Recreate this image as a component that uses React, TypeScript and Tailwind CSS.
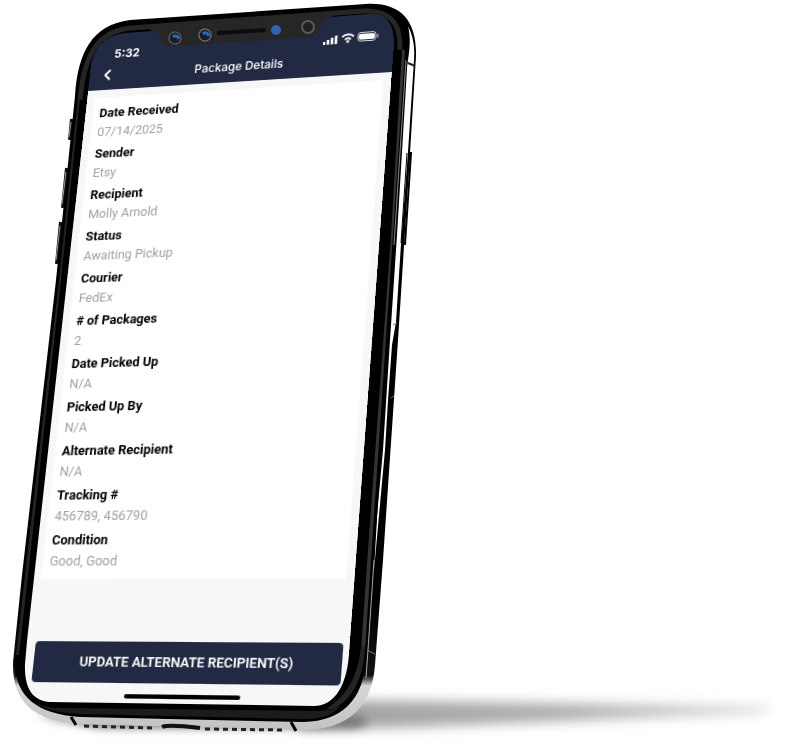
import React from "react";
import { ChevronLeft } from "lucide-react";

const details = [
  { label: "Date Received", value: "07/14/2025" },
  { label: "Sender", value: "Etsy" },
  { label: "Recipient", value: "Molly Arnold" },
  { label: "Status", value: "Awaiting Pickup" },
  { label: "Courier", value: "FedEx" },
  { label: "# of Packages", value: "2" },
  { label: "Date Picked Up", value: "N/A" },
  { label: "Picked Up By", value: "N/A" },
  { label: "Alternate Recipient", value: "N/A" },
  { label: "Tracking #", value: "456789, 456790" },
  { label: "Condition", value: "Good, Good" },
];

const PhoneBody = () => (
  <svg
    className="absolute left-0 top-0"
    width="800"
    height="746"
    viewBox="0 0 800 746"
    fill="none"
    aria-hidden="true"
  >
    <defs>
      <filter id="soft" x="-20%" y="-80%" width="140%" height="260%">
        <feGaussianBlur stdDeviation="6" />
      </filter>
      <filter id="tight" x="-20%" y="-100%" width="140%" height="300%">
        <feGaussianBlur stdDeviation="4" />
      </filter>
      <linearGradient id="floor" x1="340" y1="0" x2="775" y2="0" gradientUnits="userSpaceOnUse">
        <stop offset="0" stopColor="#a4a4a4" />
        <stop offset="0.5" stopColor="#b0b0b0" />
        <stop offset="1" stopColor="#e0e0e0" />
      </linearGradient>
      <linearGradient id="rim" x1="0" y1="600" x2="0" y2="730" gradientUnits="userSpaceOnUse">
        <stop offset="0" stopColor="#000" />
        <stop offset="0.58" stopColor="#111" />
        <stop offset="0.66" stopColor="#d8d5d8" />
        <stop offset="1" stopColor="#c4c1c4" />
      </linearGradient>
    </defs>

    {/* floor shadow */}
    <path d="M300 700 L420 701 L765 706 Q782 711 750 714 L420 727 L300 730 Z" fill="url(#floor)" filter="url(#soft)" />
    <path d="M36 716 L360 716 Q378 722 355 728 L100 728 Z" fill="#777" filter="url(#tight)" />

    {/* side keys */}
    <path d="M72 119 L70 140 M67 168 L63 208 M61 222 L57 264" stroke="#111" strokeWidth="4" />
    <path d="M71 122 L69 137 M66 172 L62 204 M60 226 L56 260" stroke="#999" strokeWidth="1" />
    <path d="M411 153 L409 153 L402 243 L405 244 Z" fill="#fff" stroke="#000" strokeWidth="2" />

    {/* metal frame */}
    <path
      d="M75 96 C78 52 92 25 130 20 L366 4 C400 2 417 20 416 56 L410 153 L398 340 L383 560 L375 665 C372 705 350 729 306 730 L78 724 C32 721 12 700 13 662 L22 575 L56 280 Z"
      fill="url(#rim)"
    />
    {/* polished highlight along the right side */}
    <path d="M408 26 C413 36 415 46 414 60 L408 152 L401 244 L396 322 L392 345 L388 400 L385 450 L374 570 L381 450 L395 240 L406 72 C410 50 411 38 408 26 Z" fill="#fff" />
    <path d="M374 560 L368 650 L366 678" stroke="#aaa" strokeWidth="1" />
    <path d="M407 153 L401 243" stroke="#000" strokeWidth="1" />
    <path d="M408 63 L415 66" stroke="#222" strokeWidth="2" />
    <path d="M393 325 L397 323 M391 398 L394 396 M367 650 L375 654" stroke="#777" strokeWidth="1" />

    <path d="M71 717 L76 725 M291 722 L296 731" stroke="#000" strokeWidth="3" />
    <path d="M84 726 L155 728 M205 729 L284 730" stroke="#222" strokeWidth="3" strokeDasharray="5 4" />
    <path d="M162 727 Q168 724 200 728" stroke="#111" strokeWidth="4" />
  </svg>
);

const Bezel = () => (
  <svg
    className="pointer-events-none absolute left-0 top-0"
    width="800"
    height="746"
    viewBox="0 0 800 746"
    fill="none"
    aria-hidden="true"
  >
    <path
      fillRule="evenodd"
      fill="#000"
      d="M77 100 C80 54 94 27 132 23 L366 7 C394 6 409 22 408 52 L397 235 L390 340 L383 450 L373 560 L366 660 C363 700 342 721 304 722 L80 717 C36 714 14 696 15 660 L24 575 L58 280 Z
         M90 72 C92 48 105 35 126 33 L368 14 C387 13 395 24 394 48 L392 72 L349 655 C346 690 332 706 314 706 L50 702 C34 701 24 690 25 664 L27 641 L88 91 Z"
    />
    {/* dark grey reflections in the glass edge */}
    <path d="M80 100 C84 54 98 31 131 28 L364 11 C391 10 401 24 400 50" stroke="#262626" strokeWidth="5" />
    <path d="M80 98 L61 280 L28 575 L19 655 L16 655 L25 575 L59 280 L78 98 Z" fill="#242424" />
    <path d="M402 50 L391 235 L368 550 L361 650 L365 650 L371 560 L393 235 L405 50 Z" fill="#333" />
    <path d="M406 60 L394 245" stroke="#888" strokeWidth="1" />
    <path d="M361 646 C358 676 348 695 326 709 L334 709 C354 698 364 676 365 646 Z" fill="#242424" />
    <path d="M36 703 C44 707 52 708 62 708 L314 711 C326 711 334 709 340 706 C332 716 320 719 304 719 L80 714 C60 713 46 710 36 703 Z" fill="#1c1c1c" />
    <path
      d="M150 30 Q158 31 160 38 Q162 47 174 46 L308 37 Q319 36 321 27 Q323 19 332 17 L330 12 L150 26 Z"
      fill="#262626"
    />
    <path d="M219 33 L264 30" stroke="#0c0c0c" strokeWidth="4" strokeLinecap="round" />
    <circle cx="175" cy="38" r="6" fill="#1b1c22" stroke="#555" strokeWidth="1.5" />
    <path d="M173 37 Q177 34 179 39" stroke="#2f66bb" strokeWidth="3" />
    <circle cx="205" cy="35" r="6" fill="#1b1c22" stroke="#666" strokeWidth="1.5" />
    <path d="M203 34 Q207 31 209 36" stroke="#2f66bb" strokeWidth="3" />
    <circle cx="276" cy="30" r="5" fill="#3262b5" />
    <circle cx="308" cy="27" r="6" fill="#202020" stroke="#5a5a5a" strokeWidth="2" />
  </svg>
);

const StatusIcons = () => (
  <svg width="60" height="14" viewBox="0 0 60 14" fill="none" aria-hidden="true">
    <path d="M1 13V10 M5 13V8 M9 13V6 M13 13V4" stroke="#fff" strokeWidth="2.6" />
    <path d="M19 6 Q25 1 31 6 M22 9 Q25 6 28 9" stroke="#fff" strokeWidth="2" />
    <circle cx="25" cy="11" r="1.5" fill="#fff" />
    <rect x="35" y="2.5" width="18" height="9" rx="3" stroke="#ddd" />
    <rect x="36" y="4" width="16" height="6" rx="2" fill="#fff" />
    <path d="M55 5V9" stroke="#ccc" />
  </svg>
);

const Screen = () => (
  <div className="absolute left-0 top-0 flex h-[672px] w-[314px] origin-top-left flex-col overflow-hidden rounded-[30px] bg-[#f7f7f8] [transform:matrix3d(0.92252,-0.06889,0,-0.0001164,-0.11587,0.92253,0,-0.00012085,0,0,1,0,95.416,31.96,0,1.007734)]">
    <header className="h-16 shrink-0 bg-[#222943] text-white">
      <div className="flex h-[34px] items-end justify-between pl-6 pr-3">
        <span className="font-['Inter'] text-xs font-bold">5:32</span>
        <div className="pb-0.5">
          <StatusIcons />
        </div>
      </div>
      <div className="grid h-7 grid-cols-3 items-center">
        <button type="button" aria-label="Back" className="ml-2.5 w-4">
          <ChevronLeft size={18} strokeWidth={3} />
        </button>
        <h1 className="whitespace-nowrap text-center font-['Inter'] text-xs font-medium">Package Details</h1>
      </div>
    </header>
    <main className="mx-2 mt-2 bg-white px-[7px] pb-1 pt-[7px]">
      <dl>
        {details.map((item) => (
          <div key={item.label} className="pb-[3px]">
            <dt className="text-[13px] font-bold leading-5 text-black">{item.label}</dt>
            <dd className="text-[13px] leading-5 text-[#a0a0a6]">{item.value}</dd>
          </div>
        ))}
      </dl>
    </main>
    <div className="mt-auto pb-1.5 pl-2.5 pr-1.5">
      <button
        type="button"
        className="h-[38px] w-full rounded bg-[#222943] text-[13px] font-semibold text-white"
      >
        UPDATE ALTERNATE RECIPIENT(S)
      </button>
      <div className="mx-auto mt-[10px] h-1 w-28 rounded-full bg-black" />
    </div>
  </div>
);

const App = () => {
  return (
    <div className="min-h-screen overflow-hidden bg-white font-['Roboto',sans-serif]">
      <div className="relative h-[746px] max-w-[800px]">
        <PhoneBody />
        <Screen />
        <Bezel />
      </div>
    </div>
  );
};

export default App;
